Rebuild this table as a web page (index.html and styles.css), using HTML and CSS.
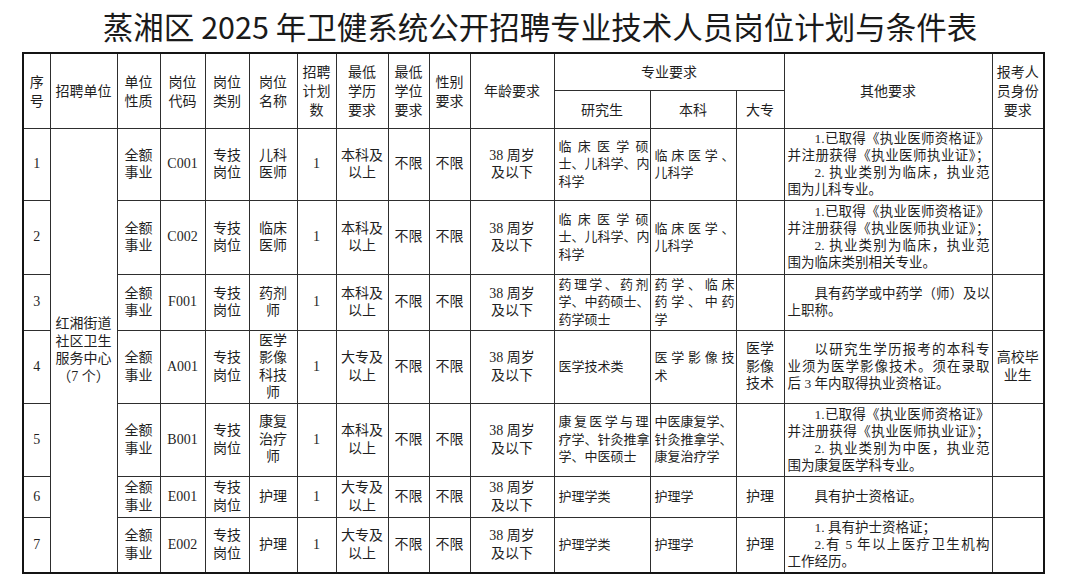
FILE: index.html
```html
<!DOCTYPE html>
<html lang="zh-CN">
<head>
<meta charset="utf-8">
<title>蒸湘区 2025 年卫健系统公开招聘专业技术人员岗位计划与条件表</title>
<link rel="stylesheet" href="styles.css">
</head>
<body>
<div class="page">
  <h1 class="title">蒸湘区 2025 年卫健系统公开招聘专业技术人员岗位计划与条件表</h1>
  <table class="plan">
    <colgroup>
      <col class="w-no"><col class="w-unit"><col class="w-nature"><col class="w-code"><col class="w-type">
      <col class="w-name"><col class="w-num"><col class="w-edu"><col class="w-deg"><col class="w-sex">
      <col class="w-age"><col class="w-pg"><col class="w-ug"><col class="w-jc"><col class="w-other"><col class="w-id">
    </colgroup>
    <thead>
      <tr class="h1">
        <th rowspan="2">序<br>号</th>
        <th rowspan="2">招聘单位</th>
        <th rowspan="2">单位<br>性质</th>
        <th rowspan="2">岗位<br>代码</th>
        <th rowspan="2">岗位<br>类别</th>
        <th rowspan="2">岗位<br>名称</th>
        <th rowspan="2">招聘<br>计划<br>数</th>
        <th rowspan="2">最低<br>学历<br>要求</th>
        <th rowspan="2">最低<br>学位<br>要求</th>
        <th rowspan="2">性别<br>要求</th>
        <th rowspan="2">年龄要求</th>
        <th colspan="3">专业要求</th>
        <th rowspan="2">其他要求</th>
        <th rowspan="2">报考人<br>员身份<br>要求</th>
      </tr>
      <tr class="h2">
        <th>研究生</th>
        <th>本科</th>
        <th>大专</th>
      </tr>
    </thead>
    <tbody>
      <tr class="r1">
        <td>1</td>
        <td rowspan="7" class="unit">红湘街道<br>社区卫生<br>服务中心<br>（7 个）</td>
        <td>全额<br>事业</td>
        <td>C001</td>
        <td>专技<br>岗位</td>
        <td>儿科<br>医师</td>
        <td>1</td>
        <td>本科及<br>以上</td>
        <td>不限</td>
        <td>不限</td>
        <td>38 周岁<br>及以下</td>
        <td class="major"><span class="ln j">临床医学硕</span><span class="ln">士、儿科学、内</span><span class="ln">科学</span></td>
        <td class="major"><span class="ln j">临床医学、</span><span class="ln">儿科学</span></td>
        <td></td>
        <td class="other"><span class="ln j ind">1.已取得《执业医师资格证》</span><span class="ln j">并注册获得《执业医师执业证》；</span><span class="ln j ind">2. 执业类别为临床，执业范</span><span class="ln">围为儿科专业。</span></td>
        <td></td>
      </tr>
      <tr class="r2">
        <td>2</td>
        <td>全额<br>事业</td>
        <td>C002</td>
        <td>专技<br>岗位</td>
        <td>临床<br>医师</td>
        <td>1</td>
        <td>本科及<br>以上</td>
        <td>不限</td>
        <td>不限</td>
        <td>38 周岁<br>及以下</td>
        <td class="major"><span class="ln j">临床医学硕</span><span class="ln">士、儿科学、内</span><span class="ln">科学</span></td>
        <td class="major"><span class="ln j">临床医学、</span><span class="ln">儿科学</span></td>
        <td></td>
        <td class="other"><span class="ln j ind">1.已取得《执业医师资格证》</span><span class="ln j">并注册获得《执业医师执业证》；</span><span class="ln j ind">2. 执业类别为临床，执业范</span><span class="ln">围为临床类别相关专业。</span></td>
        <td></td>
      </tr>
      <tr class="r3">
        <td>3</td>
        <td>全额<br>事业</td>
        <td>F001</td>
        <td>专技<br>岗位</td>
        <td>药剂<br>师</td>
        <td>1</td>
        <td>本科及<br>以上</td>
        <td>不限</td>
        <td>不限</td>
        <td>38 周岁<br>及以下</td>
        <td class="major"><span class="ln j">药理学、药剂</span><span class="ln">学、中药硕士、</span><span class="ln">药学硕士</span></td>
        <td class="major"><span class="ln j">药学、临床</span><span class="ln j">药学、中药</span><span class="ln">学</span></td>
        <td></td>
        <td class="other"><span class="ln j ind">具有药学或中药学（师）及以</span><span class="ln">上职称。</span></td>
        <td></td>
      </tr>
      <tr class="r4">
        <td>4</td>
        <td>全额<br>事业</td>
        <td>A001</td>
        <td>专技<br>岗位</td>
        <td>医学<br>影像<br>科技<br>师</td>
        <td>1</td>
        <td>大专及<br>以上</td>
        <td>不限</td>
        <td>不限</td>
        <td>38 周岁<br>及以下</td>
        <td class="major"><span class="ln">医学技术类</span></td>
        <td class="major"><span class="ln j">医学影像技</span><span class="ln">术</span></td>
        <td>医学<br>影像<br>技术</td>
        <td class="other"><span class="ln j ind">以研究生学历报考的本科专</span><span class="ln j">业须为医学影像技术。须在录取</span><span class="ln">后 3 年内取得执业资格证。</span></td>
        <td>高校毕<br>业生</td>
      </tr>
      <tr class="r5">
        <td>5</td>
        <td>全额<br>事业</td>
        <td>B001</td>
        <td>专技<br>岗位</td>
        <td>康复<br>治疗<br>师</td>
        <td>1</td>
        <td>本科及<br>以上</td>
        <td>不限</td>
        <td>不限</td>
        <td>38 周岁<br>及以下</td>
        <td class="major"><span class="ln j">康复医学与理</span><span class="ln">疗学、针灸推拿</span><span class="ln">学、中医硕士</span></td>
        <td class="major"><span class="ln">中医康复学、</span><span class="ln">针灸推拿学、</span><span class="ln">康复治疗学</span></td>
        <td></td>
        <td class="other"><span class="ln j ind">1.已取得《执业医师资格证》</span><span class="ln j">并注册获得《执业医师执业证》；</span><span class="ln j ind">2. 执业类别为中医，执业范</span><span class="ln">围为康复医学科专业。</span></td>
        <td></td>
      </tr>
      <tr class="r6">
        <td>6</td>
        <td>全额<br>事业</td>
        <td>E001</td>
        <td>专技<br>岗位</td>
        <td>护理</td>
        <td>1</td>
        <td>大专及<br>以上</td>
        <td>不限</td>
        <td>不限</td>
        <td>38 周岁<br>及以下</td>
        <td class="major"><span class="ln">护理学类</span></td>
        <td class="major"><span class="ln">护理学</span></td>
        <td>护理</td>
        <td class="other"><span class="ln ind">具有护士资格证。</span></td>
        <td></td>
      </tr>
      <tr class="r7">
        <td>7</td>
        <td>全额<br>事业</td>
        <td>E002</td>
        <td>专技<br>岗位</td>
        <td>护理</td>
        <td>1</td>
        <td>大专及<br>以上</td>
        <td>不限</td>
        <td>不限</td>
        <td>38 周岁<br>及以下</td>
        <td class="major"><span class="ln">护理学类</span></td>
        <td class="major"><span class="ln">护理学</span></td>
        <td>护理</td>
        <td class="other"><span class="ln ind">1. 具有护士资格证；</span><span class="ln j ind">2.有 5 年以上医疗卫生机构</span><span class="ln">工作经历。</span></td>
        <td></td>
      </tr>
    </tbody>
  </table>
</div>
</body>
</html>
```

FILE: styles.css
```css
* { box-sizing: border-box; }
html, body { margin: 0; background: #ffffff; }
body {
  font-family: "Noto Sans CJK SC", sans-serif;
  color: #1f1f1f;
}
.page { width: 1080px; }
.title {
  margin: 0;
  height: 52px;
  line-height: 52px;
  text-align: center;
  font-size: 30.5px;
  font-weight: 400;
  color: #1a1a1a;
}
.plan {
  margin-left: 22px;
  width: 1021px;
  table-layout: fixed;
  border-collapse: collapse;
  border: 2px solid #141414;
}
.plan th, .plan td {
  border: 1px solid #2e2e2e;
  padding: 0 2px;
  text-align: center;
  vertical-align: middle;
  font-weight: 400;
  overflow: hidden;
}
.plan th {
  font-family: "Noto Sans CJK SC", sans-serif;
  font-size: 14px;
  line-height: 19px;
}
.plan td {
  font-family: "Liberation Serif", "Noto Sans CJK SC", serif;
  font-size: 14px;
  line-height: 17.5px;
}
.w-no { width: 27px; }
.w-unit { width: 67px; }
.w-nature { width: 43px; }
.w-code { width: 45px; }
.w-type { width: 44px; }
.w-name { width: 48px; }
.w-num { width: 39px; }
.w-edu { width: 52px; }
.w-deg { width: 41px; }
.w-sex { width: 41px; }
.w-age { width: 84px; }
.w-pg { width: 96px; }
.w-ug { width: 86px; }
.w-jc { width: 48px; }
.w-other { width: 208px; }
.w-id { width: 52px; }

.h1 { height: 37px; }
.h2 { height: 38px; }
.r1 { height: 72px; }
.r2 { height: 74px; }
.r3 { height: 56px; }
.r4 { height: 73px; }
.r5 { height: 73px; }
.r6 { height: 41px; }
.r7 { height: 56px; }

.unit { line-height: 17.5px; }
.plan td.major {
  text-align: left;
  font-size: 13px;
  padding: 0 1px 0 4px;
}
.plan td.other {
  text-align: left;
  font-size: 13.5px;
  padding: 0 2px 0 3px;
  line-height: 17px;
}
.ln { display: block; white-space: nowrap; }
.j { text-align: justify; text-align-last: justify; }
.ind { text-indent: 2em; }
```
